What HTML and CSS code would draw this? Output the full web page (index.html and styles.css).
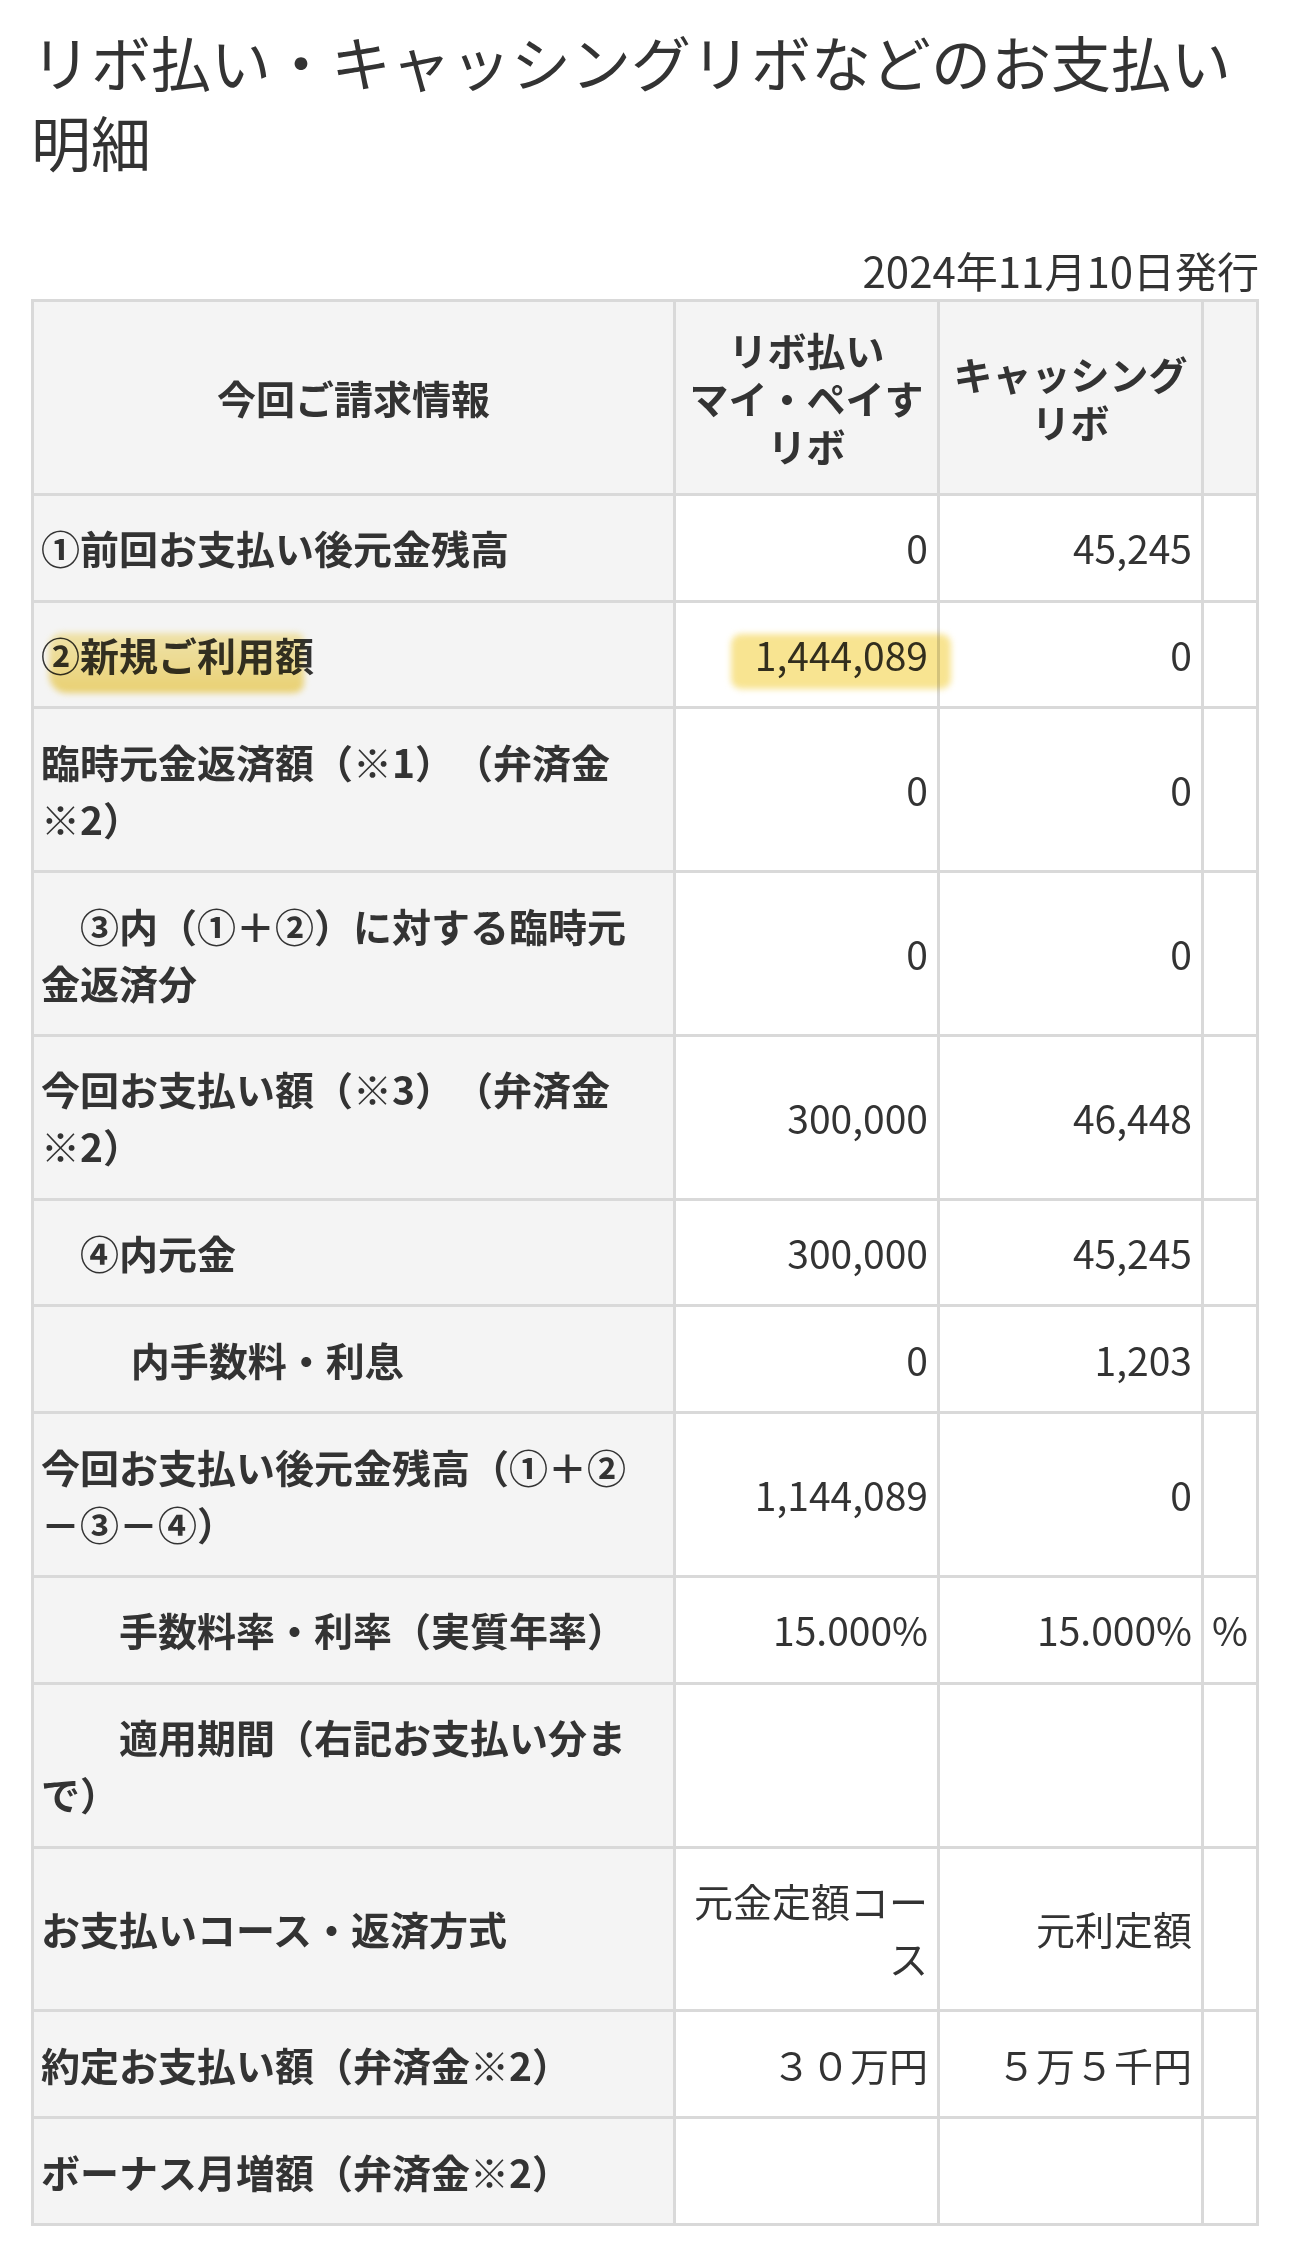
FILE: index.html
```html
<!DOCTYPE html>
<html lang="ja">
<head>
<meta charset="utf-8">
<title>リボ払い・キャッシングリボなどのお支払い明細</title>
<link rel="stylesheet" href="styles.css">
</head>
<body>
<main class="page">
  <h1 class="title">リボ払い・キャッシングリボなどのお支払い明細</h1>
  <p class="issued">2024年11月10日発行</p>
  <table class="statement">
    <colgroup>
      <col class="col-label">
      <col class="col-val">
      <col class="col-val">
      <col class="col-unit">
    </colgroup>
    <thead>
      <tr>
        <th class="head">今回ご請求情報</th>
        <th class="head">リボ払い<br>マイ・ペイす<br>リボ</th>
        <th class="head">キャッシング<br>リボ</th>
        <th class="head"></th>
      </tr>
    </thead>
    <tbody>
      <tr>
        <th class="label">①前回お支払い後元金残高</th>
        <td class="num">0</td>
        <td class="num">45,245</td>
        <td class="unit"></td>
      </tr>
      <tr>
        <th class="label"><span class="marker marker-label">②新規ご利用額</span></th>
        <td class="num"><span class="marker marker-num">1,444,089</span></td>
        <td class="num">0</td>
        <td class="unit"></td>
      </tr>
      <tr>
        <th class="label">臨時元金返済額（※1）（弁済金<span class="nw">※2）</span></th>
        <td class="num">0</td>
        <td class="num">0</td>
        <td class="unit"></td>
      </tr>
      <tr>
        <th class="label indent-1">③内（①＋②）に対する臨時元金返済分</th>
        <td class="num">0</td>
        <td class="num">0</td>
        <td class="unit"></td>
      </tr>
      <tr>
        <th class="label">今回お支払い額（※3）（弁済金<span class="nw">※2）</span></th>
        <td class="num">300,000</td>
        <td class="num">46,448</td>
        <td class="unit"></td>
      </tr>
      <tr>
        <th class="label indent-1">④内元金</th>
        <td class="num">300,000</td>
        <td class="num">45,245</td>
        <td class="unit"></td>
      </tr>
      <tr>
        <th class="label indent-3">内手数料・利息</th>
        <td class="num">0</td>
        <td class="num">1,203</td>
        <td class="unit"></td>
      </tr>
      <tr>
        <th class="label">今回お支払い後元金残高（①＋②－③－④）</th>
        <td class="num">1,144,089</td>
        <td class="num">0</td>
        <td class="unit"></td>
      </tr>
      <tr>
        <th class="label indent-2">手数料率・利率（実質年率）</th>
        <td class="num">15.000%</td>
        <td class="num">15.000%</td>
        <td class="unit">%</td>
      </tr>
      <tr>
        <th class="label indent-2">適用期間（右記お支払い分まで）</th>
        <td class="num"></td>
        <td class="num"></td>
        <td class="unit"></td>
      </tr>
      <tr>
        <th class="label">お支払いコース・返済方式</th>
        <td class="num">元金定額コース</td>
        <td class="num">元利定額</td>
        <td class="unit"></td>
      </tr>
      <tr>
        <th class="label">約定お支払い額（弁済金※2）</th>
        <td class="num">３０万円</td>
        <td class="num">５万５千円</td>
        <td class="unit"></td>
      </tr>
      <tr>
        <th class="label">ボーナス月増額（弁済金※2）</th>
        <td class="num"></td>
        <td class="num"></td>
        <td class="unit"></td>
      </tr>
    </tbody>
  </table>
</main>
</body>
</html>
```

FILE: styles.css
```css
* {
  box-sizing: border-box;
}

html,
body {
  margin: 0;
  padding: 0;
  background: #ffffff;
}

body {
  font-family: "Noto Sans CJK JP", "Noto Sans", sans-serif;
  color: #333333;
  text-spacing-trim: space-all;
}

.page {
  padding: 21px 31px 16px;
}

.title {
  margin: 0;
  font-size: 60px;
  font-weight: 400;
  line-height: 80px;
  color: #333333;
}

.issued {
  margin: 59px 0 0;
  text-align: right;
  font-size: 42px;
  line-height: 59px;
}

.statement {
  width: 1228px;
  table-layout: fixed;
  border-collapse: separate;
  border-spacing: 0;
  border-top: 3px solid #d9d9d9;
  border-left: 3px solid #d9d9d9;
  font-size: 39px;
  color: #333333;
}

.col-label {
  width: 642px;
}

.col-val {
  width: 264px;
}

.col-unit {
  width: 55px;
}

.statement th,
.statement td {
  border-right: 3px solid #d9d9d9;
  border-bottom: 3px solid #d9d9d9;
  padding: 23.4px 9px 23.4px 7px;
  line-height: 57px;
  vertical-align: middle;
}

.statement .head {
  background: #f4f4f4;
  font-weight: 700;
  text-align: center;
  line-height: 48px;
  padding-left: 8px;
  padding-right: 8px;
}

.statement .label {
  background: #f4f4f4;
  font-weight: 700;
  text-align: left;
  padding-right: 34px;
}

.statement .num {
  background: #ffffff;
  font-weight: 400;
  text-align: right;
}

.statement .unit {
  background: #ffffff;
  font-weight: 400;
  text-align: left;
  padding-left: 8px;
  padding-right: 0;
}

.indent-1 {
  text-indent: 1em;
}

.indent-2 {
  text-indent: 2em;
}

.indent-3 {
  text-indent: 2.3em;
}

.nw {
  white-space: nowrap;
}

.marker {
  position: relative;
}

.marker::after {
  content: "";
  position: absolute;
  pointer-events: none;
  mix-blend-mode: multiply;
  filter: blur(3px);
}

.marker-label::after {
  left: 8px;
  right: 10px;
  top: 7px;
  bottom: -11px;
  border-radius: 14px 8px 10px 18px;
  background: linear-gradient(180deg, #faedb0 0%, #f8e59a 45%, #f4da76 100%);
}

.marker-num::after {
  left: -24px;
  right: -23px;
  top: 8px;
  bottom: -7px;
  border-radius: 10px;
  background: #f8e491;
}
```
